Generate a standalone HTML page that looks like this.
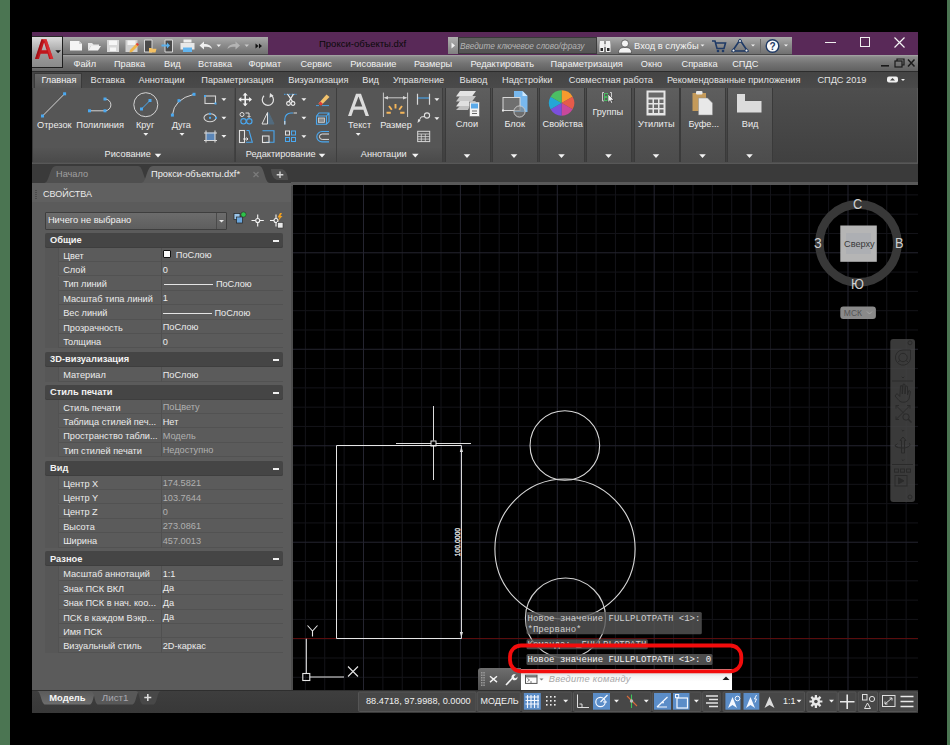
<!DOCTYPE html>
<html><head><meta charset="utf-8">
<style>
*{margin:0;padding:0;box-sizing:border-box}
html,body{width:950px;height:745px;overflow:hidden;background:#000;font-family:"Liberation Sans",sans-serif;font-size:9.2px;color:#e8e8e8}
.a{position:absolute;white-space:nowrap}
.t{line-height:11px}
.mb .t{color:#f2f2f2}
.tb .t{color:#e4e4e4}
.rt .t{color:#ececec}
.cm{font-family:"Liberation Mono",monospace;font-size:9px;line-height:11px}
.vl{font-size:14.5px;line-height:15px;color:#d0d0d0;transform:scaleX(.88);transform-origin:0 0}
.pb{font-weight:bold;color:#f2f2f2;font-size:9.3px}
.bp{top:88px;width:46px;height:73.5px;background:linear-gradient(#5e5e5e,#4c4c4c);border-left:1px solid #3a3a3a;border-right:1px solid #3a3a3a}
</style></head><body>
<div class="a" style="left:0;top:0;width:10px;height:745px;background:#4b7552"></div>
<div class="a" style="left:947px;top:0;width:3px;height:745px;background:#4b7552"></div>
<div class="a" style="left:32px;top:32px;width:886px;height:681px;background:#3c3c3c"></div>
<!-- ===== TITLE BAR ===== -->
<div class="a" style="left:32px;top:32px;width:886px;height:23.5px;background:#592958"></div>
<!-- logo button -->
<div class="a" style="left:32px;top:36px;width:31px;height:32px;background:linear-gradient(#dcdcdc,#9a9a9a 60%,#8a8a8a);border:1px solid #1e1e1e;border-left:none;border-top-color:#2a2a2a"></div>
<svg class="a" style="left:32px;top:36px" width="31" height="32" viewBox="32 36 31 32">
 <path d="M35 59 L41.5 39.2 H46.5 L53.3 59 H49.2 L47.6 53.8 H40.6 L39 59 Z M41.6 50.3 H46.6 L44.1 42.5 Z" fill="#c0161c"/>
 <path d="M41.5 39.2 H46.5 L53.3 59 H50.6 L44.6 41 Z" fill="#e23a3e" opacity=".65"/>
 <path d="M35 59 L41.5 39.2 H42.8 L37 59 Z" fill="#8e0c10" opacity=".6"/>
 <path d="M55.3 50.3 H61 L58.15 53.2 Z" fill="#1e1e1e"/>
</svg>
<!-- QAT -->
<div class="a" style="left:63px;top:37px;width:205px;height:18px;background:linear-gradient(#a9a9a9,#8a8a8a 50%,#707070);border-bottom:1px solid #4a4a4a"></div>
<svg class="a" style="left:63px;top:37px" width="205" height="18" viewBox="0 0 205 18">
 <!-- new -->
 <path d="M7 4 H16 L19 7 V13.5 H7 Z" fill="#f4f4f4"/>
 <path d="M16 4 V7 H19" fill="#cfcfcf"/>
 <!-- open -->
 <path d="M25 6 H29 L30.5 7.5 H36 V9 H28 L25 13.5 Z" fill="#e8e8e8"/>
 <path d="M28 9 H38 L35 13.5 H25 Z" fill="#f2f2f2"/>
 <!-- save -->
 <path d="M44 3 H56 V15 H44 Z" fill="#d8d8d8"/>
 <path d="M46 3.5 H54 V8 H46 Z" fill="#f6f6f6"/>
 <path d="M47 10.5 H53 V14 H47 Z" fill="#f6f6f6"/>
 <!-- save as -->
 <path d="M62.5 3 H74.5 V15 H62.5 Z" fill="#d0d0d0"/>
 <path d="M64.5 3.5 H72.5 V8 H64.5 Z" fill="#f2f2f2"/>
 <path d="M67 13 L73.5 6.5 L75.5 8.5 L69 15 L66.5 15.5 Z" fill="#f0b64a"/>
 <path d="M72.8 7.2 L74.2 5.8 L76 7.6 L74.6 9 Z" fill="#e0403a"/>
 <!-- phone folder -->
 <path d="M81.5 3 H89 V15 H81.5 Z" fill="#4a4a4a" stroke="#d8d8d8" stroke-width="1"/>
 <path d="M86 11 H88.5 L89.3 11.8 H93.5 L92.5 15.5 H86 Z" fill="#f3c062"/>
 <!-- phone arrow -->
 <path d="M102 3 H109.5 V15 H102 Z" fill="#4a4a4a" stroke="#d8d8d8" stroke-width="1"/>
 <path d="M98.5 7.5 H104 V5.5 L107 8.5 L104 11.5 V9.5 H98.5 Z" fill="#5ab0ec"/>
 <!-- print -->
 <path d="M120.5 2.5 H128.5 V5.5 H120.5 Z" fill="#efefef"/>
 <path d="M117.5 6 H131.5 V12.5 H117.5 Z" fill="#e8e8e8"/>
 <path d="M120 10.5 H129 V15 H120 Z" fill="#62b4ee"/>
 <!-- undo -->
 <path d="M136.5 8.5 L141 4.5 V7 C145.5 7 148.5 8.5 149 12 C147 10 145 9.8 141 9.8 V12.5 Z" fill="#f0f0f0"/>
 <path d="M153.5 7.5 H158 L155.75 10 Z" fill="#f0f0f0"/>
 <!-- redo -->
 <path d="M177 8.5 L172.5 4.5 V7 C168 7 165 8.5 164.5 12 C166.5 10 168.5 9.8 172.5 9.8 V12.5 Z" fill="#b4b4b4"/>
 <path d="M181.5 7.5 H186 L183.75 10 Z" fill="#c8c8c8"/>
 <!-- >> -->
 <path d="M192.5 6.5 L195.5 9 L192.5 11.5 Z M196 6.5 L199 9 L196 11.5 Z" fill="#111"/>
</svg>
<div class="a t" style="left:319px;top:37.5px;width:120px;font-size:9.5px;color:#0a0a0a">Прокси-объекты.dxf</div>
<!-- search -->
<div class="a" style="left:448px;top:37px;width:10px;height:17px;background:linear-gradient(#b0b0b0,#808080)"></div>
<svg class="a" style="left:448px;top:37px" width="10" height="17"><path d="M3.5 5.5 L7 8.5 L3.5 11.5 Z" fill="#f2f2f2"/></svg>
<div class="a" style="left:458px;top:37px;width:139px;height:17px;background:linear-gradient(#5e5e5e,#545454);border:1px solid #3c3c3c;border-top-color:#383838"></div>
<div class="a t" style="left:460px;top:40.5px;font-style:italic;color:#b4b4b4;font-size:8.3px">Введите ключевое слово/фразу</div>
<div class="a" style="left:597px;top:37px;width:195px;height:18px;background:linear-gradient(#a9a9a9,#8a8a8a 50%,#707070);border-bottom:1px solid #4a4a4a"></div>
<svg class="a" style="left:597px;top:37px" width="195" height="18" viewBox="0 0 195 18">
 <!-- binoculars -->
 <path d="M3 4 H7 V15 H2.5 V8 Z M9 4 H13 L13.5 8 V15 H9 Z" fill="#f2f2f2"/>
 <path d="M7 7 H9 V10 H7 Z" fill="#dcdcdc"/>
 <rect x="3.5" y="11" width="2.5" height="3" fill="#2a2a2a"/><rect x="10" y="11" width="2.5" height="3" fill="#2a2a2a"/>
 <!-- user -->
 <circle cx="28" cy="6.5" r="3.6" fill="#f3f3f3" stroke="#333" stroke-width=".6"/>
 <path d="M21.5 16 C21.5 11.5 24 10.5 28 10.5 C32 10.5 34.5 11.5 34.5 16 Z" fill="#f3f3f3" stroke="#333" stroke-width=".6"/>
 <!-- arrow -->
 <path d="M103.5 7.5 H107.5 L105.5 9.5 Z" fill="#f0f0f0"/>
 <!-- cart -->
 <path d="M115 4 H118 L120 11.5 H127 L128.5 6 H119" fill="none" stroke="#1f3a66" stroke-width="1.6"/>
 <circle cx="121" cy="14" r="1.3" fill="#1f3a66"/><circle cx="126" cy="14" r="1.3" fill="#1f3a66"/>
 <!-- autodesk -->
 <path d="M143 3 L150.5 14 H135.5 Z" fill="none" stroke="#1f3a66" stroke-width="1.6"/>
 <circle cx="143" cy="4" r="1.5" fill="#f0f0f0" stroke="#1f3a66"/>
 <circle cx="136.5" cy="13.5" r="1.5" fill="#f0f0f0" stroke="#1f3a66"/>
 <circle cx="149.5" cy="13.5" r="1.5" fill="#f0f0f0" stroke="#1f3a66"/>
 <path d="M154 7.5 H158 L156 9.5 Z" fill="#f0f0f0"/>
 <rect x="163" y="2" width="1" height="14" fill="#6a6a6a"/>
 <!-- help -->
 <circle cx="175.5" cy="9" r="6.3" fill="#fbfbfb" stroke="#1f3a66" stroke-width="1.4"/>
 <text x="175.5" y="12.6" font-family="Liberation Sans" font-weight="bold" font-size="10" fill="#1f3a66" text-anchor="middle">?</text>
 <path d="M187 7.5 H191 L189 9.5 Z" fill="#f0f0f0"/>
</svg>
<div class="a t" style="left:634px;top:40.8px;color:#f4f4f4;font-size:9.35px">Вход в службы</div>
<!-- window controls -->
<div class="a" style="left:825px;top:42px;width:11px;height:1px;background:#f0f0f0"></div>
<div class="a" style="left:860px;top:37px;width:10px;height:10px;border:1px solid #f0f0f0"></div>
<svg class="a" style="left:894px;top:37px" width="11" height="11"><path d="M.5 .5 L10.5 10.5 M10.5 .5 L.5 10.5" stroke="#f4f4f4" stroke-width="1.2"/></svg>

<!-- ===== MENU BAR ===== -->
<div class="a" style="left:63px;top:55px;width:855px;height:15.5px;background:linear-gradient(#a8a8a8,#8a8a8a 12%,#727272 55%,#606060)"></div>
<div class="a" style="left:32px;top:68px;width:31px;height:2.5px;background:linear-gradient(#6e6e6e,#606060)"></div>
<div class="a" style="left:32px;top:70.5px;width:886px;height:1px;background:#2c2c2c"></div>
<div class="mb">
 <div class="a t" style="left:73.5px;top:59px">Файл</div>
 <div class="a t" style="left:114px;top:59px">Правка</div>
 <div class="a t" style="left:164px;top:59px">Вид</div>
 <div class="a t" style="left:198px;top:59px">Вставка</div>
 <div class="a t" style="left:248.5px;top:59px">Формат</div>
 <div class="a t" style="left:300.4px;top:59px">Сервис</div>
 <div class="a t" style="left:350.2px;top:59px">Рисование</div>
 <div class="a t" style="left:414px;top:59px">Размеры</div>
 <div class="a t" style="left:470.5px;top:59px">Редактировать</div>
 <div class="a t" style="left:550.6px;top:59px">Параметризация</div>
 <div class="a t" style="left:640.8px;top:59px">Окно</div>
 <div class="a t" style="left:681.5px;top:59px">Справка</div>
 <div class="a t" style="left:732.2px;top:59px">СПДС</div>
</div>
<svg class="a" style="left:878px;top:56px" width="40" height="14" viewBox="0 0 40 14">
 <rect x="3" y="9" width="8" height="1.6" fill="#1a1a1a"/>
 <rect x="17" y="5" width="7" height="6" fill="none" stroke="#1a1a1a" stroke-width="1.2"/>
 <path d="M19 5 V3 H26 V9 H24" fill="none" stroke="#1a1a1a" stroke-width="1.2"/>
 <path d="M30 3.5 L36.5 10.5 M36.5 3.5 L30 10.5" stroke="#1a1a1a" stroke-width="1.5"/>
</svg>

<!-- ===== RIBBON TAB ROW ===== -->
<div class="a" style="left:32px;top:71.5px;width:886px;height:16.5px;background:linear-gradient(#444,#4a4a4a)"></div>
<div class="a" style="left:34px;top:73px;width:48px;height:15px;background:linear-gradient(#676767,#575757);border:1px solid #3a3a3a;border-bottom:none"></div>
<div class="tb">
 <div class="a t" style="left:41.4px;top:74.7px;color:#f6f6f6">Главная</div>
 <div class="a t" style="left:90.6px;top:74.7px">Вставка</div>
 <div class="a t" style="left:138.6px;top:74.7px">Аннотации</div>
 <div class="a t" style="left:201.3px;top:74.7px">Параметризация</div>
 <div class="a t" style="left:288.3px;top:74.7px">Визуализация</div>
 <div class="a t" style="left:362.3px;top:74.7px">Вид</div>
 <div class="a t" style="left:393.1px;top:74.7px">Управление</div>
 <div class="a t" style="left:459.6px;top:74.7px">Вывод</div>
 <div class="a t" style="left:502px;top:74.7px">Надстройки</div>
 <div class="a t" style="left:568.8px;top:74.7px">Совместная работа</div>
 <div class="a t" style="left:666.9px;top:74.7px">Рекомендованные приложения</div>
 <div class="a t" style="left:817.4px;top:74.7px">СПДС 2019</div>
</div>
<svg class="a" style="left:884px;top:73px" width="30" height="14" viewBox="0 0 30 14">
 <rect x="3" y="3.5" width="11" height="6" rx="2" fill="#f0f0f0"/>
 <path d="M6 7.5 L8.5 5 L11 7.5 Z" fill="#444"/>
 <path d="M17 6 H21 L19 8 Z" fill="#f0f0f0"/>
</svg>
<!-- ===== RIBBON ===== -->
<div class="a" style="left:32px;top:88px;width:886px;height:74px;background:linear-gradient(#4e4e4e,#404040)"></div>
<!-- tool panels (flat) -->
<div class="a" style="left:32px;top:88px;width:202px;height:59.5px;background:#565656;border-left:1px solid #3a3a3a"></div>
<div class="a" style="left:32px;top:147.5px;width:202px;height:14px;background:linear-gradient(#555,#4a4a4a);border-left:1px solid #3a3a3a"></div>
<div class="a" style="left:234.5px;top:88px;width:101px;height:59.5px;background:#565656;border-left:1px solid #3e3e3e"></div>
<div class="a" style="left:234.5px;top:147.5px;width:101px;height:14px;background:linear-gradient(#555,#4a4a4a);border-left:1px solid #3e3e3e"></div>
<div class="a" style="left:336px;top:88px;width:107px;height:59.5px;background:#565656;border-left:1px solid #3e3e3e;border-right:1px solid #3e3e3e"></div>
<div class="a" style="left:336px;top:147.5px;width:107px;height:14px;background:linear-gradient(#555,#4a4a4a);border-left:1px solid #3e3e3e;border-right:1px solid #3e3e3e"></div>
<!-- big-button panels -->
<div class="a bp" style="left:444.5px"></div>
<div class="a bp" style="left:492px"></div>
<div class="a bp" style="left:539px"></div>
<div class="a bp" style="left:586px"></div>
<div class="a bp" style="left:633.5px"></div>
<div class="a bp" style="left:680px"></div>
<div class="a bp" style="left:727px"></div>
<div class="a" style="left:32px;top:161.5px;width:886px;height:2.5px;background:linear-gradient(#4a4a4a,#5c5c5c)"></div>
<div class="a" style="left:916.5px;top:88px;width:1.5px;height:75px;background:#5a5a5a"></div>

<svg class="a" style="left:32px;top:88px" width="886" height="75" viewBox="32 88 886 75">
 <!-- line -->
 <path d="M42.5 116 L64.6 93.8" stroke="#d4d4d4" stroke-width="1"/>
 <rect x="41" y="114.5" width="3" height="3" fill="#4aa8f0"/><rect x="63.1" y="92.3" width="3" height="3" fill="#4aa8f0"/>
 <!-- polyline -->
 <path d="M89.5 110.8 H105 A5.9 5.9 0 0 0 105 99" stroke="#d4d4d4" stroke-width="1" fill="none"/>
 <rect x="88" y="109.3" width="3" height="3" fill="#4aa8f0"/><rect x="103.5" y="109.3" width="3" height="3" fill="#4aa8f0"/><rect x="103.5" y="97.5" width="3" height="3" fill="#4aa8f0"/>
 <!-- circle -->
 <circle cx="145.8" cy="104.7" r="12" stroke="#d4d4d4" stroke-width="1" fill="none"/>
 <path d="M141.5 109 L150 100.5" stroke="#4aa8f0" stroke-width="1"/>
 <rect x="140" y="107.5" width="3" height="3" fill="#4aa8f0"/><rect x="148.5" y="99" width="3" height="3" fill="#4aa8f0"/>
 <path d="M143.30 133.10 H148.30 L145.80 135.80 Z" fill="#f0f0f0"/>
 <!-- arc -->
 <path d="M172.4 115.1 Q174 99 194 94.3" stroke="#d4d4d4" stroke-width="1" fill="none"/>
 <rect x="170.9" y="113.6" width="3" height="3" fill="#4aa8f0"/><rect x="177.5" y="99.2" width="3" height="3" fill="#4aa8f0"/><rect x="192.5" y="92.8" width="3" height="3" fill="#4aa8f0"/>
 <path d="M179.50 133.10 H184.50 L182.00 135.80 Z" fill="#f0f0f0"/>
 <!-- rect small -->
 <rect x="205" y="96" width="10.5" height="7.5" stroke="#d4d4d4" stroke-width="1.1" fill="none"/>
 <rect x="204" y="95" width="2" height="2" fill="#4aa8f0"/><rect x="214.5" y="102.5" width="2" height="2" fill="#4aa8f0"/>
 <path d="M221.40 98.30 H226.40 L223.90 101.00 Z" fill="#f0f0f0"/>
 <!-- ellipse -->
 <ellipse cx="210" cy="117.8" rx="6" ry="4" stroke="#d4d4d4" stroke-width="1.1" fill="none"/>
 <rect x="209" y="116.8" width="2" height="2" fill="#4aa8f0"/><rect x="215" y="116.8" width="2" height="2" fill="#4aa8f0"/><rect x="209" y="112.8" width="2" height="2" fill="#4aa8f0"/>
 <path d="M221.40 116.80 H226.40 L223.90 119.50 Z" fill="#f0f0f0"/>
 <!-- hatch -->
 <rect x="206" y="132.5" width="9" height="8.5" fill="#5b86b8"/>
 <path d="M204 133 H217 M204 140.5 H217 M206 130.5 V142.5 M215 130.5 V142.5" stroke="#d8d8d8" stroke-width="1.1"/>
 <path d="M221.40 135.10 H226.40 L223.90 137.80 Z" fill="#f0f0f0"/>

 <!-- modify: move -->
 <path d="M245.2 93.5 V105.5 M239.2 99.5 H251.2" stroke="#f2f2f2" stroke-width="1.6"/>
 <path d="M245.2 92.8 L242.6 95.6 H247.8 Z M245.2 106.2 L242.6 103.4 H247.8 Z M238.5 99.5 L241.3 96.9 V102.1 Z M251.9 99.5 L249.1 96.9 V102.1 Z" fill="#f2f2f2"/>
 <!-- rotate -->
 <path d="M271.5 95.5 A5.6 5.6 0 1 1 264 95.7" stroke="#e4e4e4" stroke-width="1.2" fill="none"/>
 <path d="M270 93 L273.5 95.8 L269.5 97.8 Z" fill="#e4e4e4"/>
 <!-- trim -->
 <path d="M284 94.3 H297" stroke="#4aa8f0" stroke-width="1" stroke-dasharray="1.5 1"/>
 <path d="M287.5 94 L292.5 101.5 M293.5 94 L289 101.5" stroke="#f0f0f0" stroke-width="1.3"/>
 <circle cx="288.5" cy="103.5" r="1.9" stroke="#f0f0f0" stroke-width="1.1" fill="none"/><circle cx="293" cy="103.5" r="1.9" stroke="#f0f0f0" stroke-width="1.1" fill="none"/>
 <path d="M301.40 98.30 H306.40 L303.90 101.00 Z" fill="#f0f0f0"/>
 <!-- erase -->
 <path d="M318.5 103.5 L326.5 94.5 L329.5 97 L321 105.5 Z" fill="#f1c16c"/>
 <path d="M318.5 103.5 L320.5 101.5 L323 104 L321 105.5 Z" fill="#e03c38"/>
 <path d="M316 105.6 H319 M322 105.6 H329" stroke="#4aa8f0" stroke-width=".9"/>
 <!-- copy -->
 <circle cx="242" cy="114.5" r="2" stroke="#e0e0e0" stroke-width="1" fill="none"/>
 <path d="M245.5 113 H249 V117 M247.5 116 L249 117.5 L250.5 116" stroke="#e0e0e0" stroke-width="1" fill="none"/>
 <circle cx="243.5" cy="121.3" r="2.7" stroke="#4aa8f0" stroke-width="1.1" fill="none"/><circle cx="249.3" cy="121.3" r="2.7" stroke="#4aa8f0" stroke-width="1.1" fill="none"/>
 <!-- mirror -->
 <path d="M267.5 112.5 V124 H262 Z" fill="none" stroke="#e0e0e0" stroke-width="1"/>
 <path d="M268.5 112.5 V124 H274 Z" fill="#4aa8f0" opacity=".25" stroke="#4aa8f0" stroke-width="1"/>
 <!-- fillet -->
 <path d="M284.8 124.5 V119 A6 6 0 0 1 290.8 113 H293" stroke="#4aa8f0" stroke-width="1.1" fill="none"/>
 <path d="M284.8 121 V124.5 M293.5 113 H297" stroke="#e0e0e0" stroke-width="1.1"/>
 <path d="M301.40 116.80 H306.40 L303.90 119.50 Z" fill="#f0f0f0"/>
 <!-- 3d box -->
 <path d="M316.5 116 L319 113 H329 V121.5 L326.5 124.3 H316.5 Z M316.5 116 H326.5 V124.3 M326.5 116 L329 113" stroke="#4aa8f0" stroke-width="1.1" fill="none"/>
 <rect x="318.5" y="118" width="6" height="4.3" fill="#8a8a8a" stroke="#d8d8d8" stroke-width=".8"/>
 <!-- stretch -->
 <rect x="239.5" y="130.5" width="5" height="12" stroke="#e0e0e0" stroke-width="1.1" fill="none"/>
 <path d="M246.5 130.5 L249 130.5 L252.3 142.3 H246" stroke="#4aa8f0" stroke-width="1.1" fill="none"/>
 <path d="M243 139 H248 M246.5 137.5 L248 139 L246.5 140.5" stroke="#f0f0f0" stroke-width=".9" fill="none"/>
 <!-- scale -->
 <path d="M262.5 130.8 H274 V142.3 H266" stroke="#4aa8f0" stroke-width="1.1" fill="none"/>
 <rect x="262.5" y="136" width="6.5" height="6.5" stroke="#e0e0e0" stroke-width="1.1" fill="none"/>
 <!-- array -->
 <rect x="285.5" y="131" width="4" height="4" stroke="#e0e0e0" stroke-width="1" fill="none"/>
 <rect x="291.5" y="131" width="4" height="4" stroke="#4aa8f0" stroke-width="1" fill="none"/>
 <rect x="285.5" y="137.5" width="4" height="4" stroke="#4aa8f0" stroke-width="1" fill="none"/>
 <rect x="291.5" y="137.5" width="4" height="4" stroke="#4aa8f0" stroke-width="1" fill="none"/>
 <path d="M301.40 135.30 H306.40 L303.90 138.00 Z" fill="#f0f0f0"/>
 <!-- offset -->
 <path d="M329 131.5 H322 A5.2 5.2 0 0 0 322 141.9 H329" stroke="#4aa8f0" stroke-width="1.1" fill="none"/>
 <path d="M329 134 H322.2 A2.7 2.7 0 0 0 322.2 139.4 H329" stroke="#e0e0e0" stroke-width="1" fill="none"/>
 <path d="M318.70 153.70 H325.30 L322.00 157.50 Z" fill="#f4f4f4"/>
 <path d="M154.70 153.70 H161.30 L158.00 157.50 Z" fill="#f4f4f4"/>

 <!-- annotation A -->
 <path d="M348 116 L356 93.8 H361 L369 116 H365.6 L363.4 109.8 H353.6 L351.4 116 Z M354.7 106.6 H362.3 L358.5 96.5 Z" fill="#dcdcdc" fill-rule="evenodd"/>
 <path d="M355.70 133.10 H360.70 L358.20 135.80 Z" fill="#f0f0f0"/>
 <!-- dimension -->
 <path d="M383.4 92.6 V117 M407.6 92.6 V117" stroke="#d8d8d8" stroke-width=".9"/>
 <path d="M384.5 97.8 H406.5" stroke="#d8d8d8" stroke-width=".9"/>
 <path d="M384 97.8 L388 96 V99.6 Z M407 97.8 L403 96 V99.6 Z" fill="#d8d8d8"/>
 <path d="M395.5 104 V108.5 M389 106 L391.8 109.8 M402 106 L399.2 109.8 M386.5 112.8 H390.8 M404.5 112.8 H400.2" stroke="#f5b65a" stroke-width="1.9"/>
 <!-- linear dim small -->
 <path d="M417.5 93.8 V104.8 M429.5 93.8 V104.8" stroke="#d8d8d8" stroke-width="1.2"/>
 <path d="M418 98 H429" stroke="#4aa8f0" stroke-width="1.1"/>
 <path d="M434.40 98.30 H439.40 L436.90 101.00 Z" fill="#f0f0f0"/>
 <!-- leader -->
 <circle cx="427" cy="115.5" r="2.6" stroke="#e0e0e0" stroke-width="1.1" fill="none"/>
 <path d="M424.7 116.5 L421 117 L418.5 122" stroke="#e0e0e0" stroke-width="1" fill="none"/>
 <path d="M417.5 123 L418.2 119 L420.6 120.6 Z" fill="#e0e0e0"/>
 <path d="M434.40 117.30 H439.40 L436.90 120.00 Z" fill="#f0f0f0"/>
 <!-- table -->
 <rect x="417.7" y="131.3" width="12" height="10.3" stroke="#d8d8d8" stroke-width="1" fill="none"/>
 <path d="M417.7 134 H429.7 M417.7 136.6 H429.7 M417.7 139.1 H429.7 M421.3 134 V141.6 M425.3 134 V141.6" stroke="#d8d8d8" stroke-width=".8"/>
 <path d="M412.00 153.70 H418.60 L415.30 157.50 Z" fill="#f4f4f4"/>

 <!-- Layers -->
 <path d="M460 91 H476 L472 96.5 H456 Z" fill="#e4e4e4"/>
 <path d="M460 96 H476 L472 101.5 H456 Z" fill="#c8c8c8"/>
 <path d="M460 101 H476 L472 106.5 H456 Z" fill="#e0e0e0"/>
 <path d="M460 106 H470 L468 110 H456 Z" fill="#c0c0c0"/>
 <rect x="469.5" y="102" width="10" height="14.5" fill="#f2f2f2" stroke="#555" stroke-width=".5"/>
 <rect x="471" y="103.5" width="7" height="5" fill="#5aa9e8"/>
 <path d="M472 111 H477 M472 113.5 H477" stroke="#444" stroke-width=".8"/>
 <path d="M463.70 154.20 H470.30 L467.00 158.00 Z" fill="#f4f4f4"/>
 <!-- Block -->
 <path d="M514 91 H522.5 L527.5 96 V112 H514 Z" fill="#78b8ee"/>
 <path d="M522.5 91 V96 H527.5" fill="#d0e8fb"/>
 <rect x="503" y="97.5" width="17" height="13" fill="#6f6f6f" stroke="#d8d8d8" stroke-width="1"/>
 <circle cx="519.5" cy="111.5" r="5.6" fill="#7a7a7a" fill-opacity=".6" stroke="#c8c8c8" stroke-width="1"/>
 <rect x="502" y="109.5" width="2" height="2" fill="#e8e8e8"/>
 <path d="M510.70 154.20 H517.30 L514.00 158.00 Z" fill="#f4f4f4"/>
 <!-- Properties wheel -->
 <g transform="translate(561.6 103)">
  <path d="M0 0 L0 -12.7 A12.7 12.7 0 0 1 11 -6.35 Z" fill="#f79a2e"/>
  <path d="M0 0 L11 -6.35 A12.7 12.7 0 0 1 11 6.35 Z" fill="#e65b4a"/>
  <path d="M0 0 L11 6.35 A12.7 12.7 0 0 1 0 12.7 Z" fill="#c9489b"/>
  <path d="M0 0 L0 12.7 A12.7 12.7 0 0 1 -11 6.35 Z" fill="#7b4fdc"/>
  <path d="M0 0 L-11 6.35 A12.7 12.7 0 0 1 -11 -6.35 Z" fill="#24a6d6"/>
  <path d="M0 0 L-11 -6.35 A12.7 12.7 0 0 1 0 -12.7 Z" fill="#4cbe64"/>
  <path d="M0 0 L0 -12.7 A12.7 12.7 0 0 1 5 -11.7 Z" fill="#f4c02a" opacity=".0"/>
 </g>
 <path d="M558.20 154.20 H564.80 L561.50 158.00 Z" fill="#f4f4f4"/>
 <!-- Groups -->
 <path d="M604 92.5 H602.5 V101 H604 M610 92.5 H611.5 V101 H610" stroke="#d8d8d8" stroke-width=".9" fill="none"/>
 <rect x="604.5" y="93.5" width="3" height="3" fill="none" stroke="#4cbe64" stroke-width=".9"/>
 <rect x="604.5" y="97.5" width="3" height="3" fill="none" stroke="#4cbe64" stroke-width=".9"/>
 <path d="M608 94 L608 102.5 L610 100.5 L611.5 103.5 L612.8 103 L611.3 100 L614 100 Z" fill="#f4f4f4" stroke="#222" stroke-width=".5"/>
 <path d="M605.20 154.20 H611.80 L608.50 158.00 Z" fill="#f4f4f4"/>
 <!-- Utilities calc -->
 <rect x="646.5" y="90.5" width="19" height="25" fill="#e6e6e6"/>
 <rect x="648.5" y="92.5" width="15" height="5" fill="#6a6a6a"/>
 <g fill="#6a6a6a"><rect x="648.5" y="99.5" width="4" height="3.5"/><rect x="654" y="99.5" width="4" height="3.5"/><rect x="659.5" y="99.5" width="4" height="3.5"/>
 <rect x="648.5" y="104.5" width="4" height="3.5"/><rect x="654" y="104.5" width="4" height="3.5"/><rect x="659.5" y="104.5" width="4" height="3.5"/>
 <rect x="648.5" y="109.5" width="4" height="3.5"/><rect x="654" y="109.5" width="4" height="3.5"/><rect x="659.5" y="109.5" width="4" height="3.5"/></g>
 <path d="M652.70 154.20 H659.30 L656.00 158.00 Z" fill="#f4f4f4"/>
 <!-- Clipboard -->
 <rect x="692.5" y="93" width="13.5" height="18" fill="#c49a5a"/>
 <rect x="696" y="91" width="6.5" height="3.5" rx="1" fill="#e8e8e8"/>
 <path d="M698.5 98 H707.5 L712.5 103 V115 H698.5 Z" fill="#e8e8e8" stroke="#888" stroke-width=".5"/>
 <path d="M699.20 154.20 H705.80 L702.50 158.00 Z" fill="#f4f4f4"/>
 <!-- View -->
 <path d="M737 94 H745 V101 H761.5 V112.5 H737 Z" fill="#dcdcdc"/>
 <path d="M746.20 154.20 H752.80 L749.50 158.00 Z" fill="#f4f4f4"/>
</svg>
<div class="rt">
 <div class="a t" style="left:37px;top:120px">Отрезок</div>
 <div class="a t" style="left:76.3px;top:120px">Полилиния</div>
 <div class="a t" style="left:136px;top:120px">Круг</div>
 <div class="a t" style="left:171.7px;top:120px">Дуга</div>
 <div class="a t" style="left:104.6px;top:148.5px">Рисование</div>
 <div class="a t" style="left:245.7px;top:148.5px">Редактирование</div>
 <div class="a t" style="left:360.8px;top:148.5px">Аннотации</div>
 <div class="a t" style="left:348px;top:120px">Текст</div>
 <div class="a t" style="left:380.2px;top:120px">Размер</div>
 <div class="a t" style="left:455.7px;top:118.5px">Слои</div>
 <div class="a t" style="left:504.4px;top:118.5px">Блок</div>
 <div class="a t" style="left:542.6px;top:118.5px">Свойства</div>
 <div class="a t" style="left:592.4px;top:106.5px">Группы</div>
 <div class="a t" style="left:638px;top:118.5px">Утилиты</div>
 <div class="a t" style="left:688.4px;top:118.5px">Буфе...</div>
 <div class="a t" style="left:741.8px;top:118.5px">Вид</div>
</div>
<!-- ===== DOC TABS ===== -->
<div class="a" style="left:32px;top:164px;width:886px;height:19px;background:#3a3a3a"></div>
<svg class="a" style="left:32px;top:163px" width="886" height="20" viewBox="32 163 886 20">
 <path d="M44 183 C50 183 49 166 56 166 H138 C144 166 143 183 150 183 Z" fill="#4f4f4f"/>
 <path d="M141 183 C147 183 146 166 153 166 H259 C265 166 264 183 270 183 Z" fill="#5a5a5a"/>
 <path d="M271 169 H281 C286 169 288 176 288 180 H278 C273 180 271 173 271 169 Z" fill="#4e4e4e"/>
 <path d="M253.5 172 L258.5 177 M258.5 172 L253.5 177" stroke="#7a7a7a" stroke-width="1.3"/>
 <path d="M280 171.5 V178 M276.7 174.7 H283.3" stroke="#d4d4d4" stroke-width="1.4"/>
</svg>
<div class="a t" style="left:56px;top:169px;color:#a0a0a0">Начало</div>
<div class="a t" style="left:151px;top:169px;color:#f0f0f0;font-size:9.3px">Прокси-объекты.dxf*</div>
<!-- ===== PROPERTIES ===== -->
<div class="a" style="left:32px;top:183px;width:261px;height:507px;background:#5b5b5b;border-right:2px solid #4c4c4c"></div>
<div class="a" style="left:32px;top:183px;width:259px;height:18.5px;background:#606060"></div>
<div class="a" style="left:35px;top:190px;width:2px;height:10px;background:repeating-linear-gradient(#4a4a4a 0 1px,transparent 1px 2px)"></div>
<div class="a t" style="left:43px;top:188.5px;color:#eaeaea;font-size:9px">СВОЙСТВА</div>
<div class="a" style="left:44.5px;top:212px;width:182px;height:18px;background:linear-gradient(#6c6c6c,#5e5e5e);border:1px solid #3e3e3e;border-radius:1px"></div>
<div class="a" style="left:216px;top:213px;width:1px;height:16px;background:#4a4a4a"></div>
<svg class="a" style="left:217px;top:213px" width="9" height="16"><path d="M2 7 H7 L4.5 9.5 Z" fill="#e8e8e8"/></svg>
<div class="a t" style="left:47.9px;top:214.5px;color:#f0f0f0;font-size:9.3px">Ничего не выбрано</div>
<svg class="a" style="left:230px;top:210px" width="60" height="22" viewBox="230 210 60 22">
 <rect x="234" y="213.5" width="6" height="6" fill="#9bc6ea" stroke="#222" stroke-width=".7"/>
 <rect x="236.5" y="217" width="6" height="6" fill="#6aa6dc" stroke="#222" stroke-width=".7"/>
 <circle cx="243.5" cy="214.5" r="2.6" fill="#2ec24a" stroke="#222" stroke-width=".5"/>
 <circle cx="257.7" cy="220.5" r="2" fill="none" stroke="#f4f4f4" stroke-width="1.1"/>
 <path d="M251.5 220.5 H255.5 M259.8 220.5 H263.8 M257.7 214.5 V218.3 M257.7 222.7 V226.5" stroke="#f4f4f4" stroke-width="1.1"/>
 <circle cx="276" cy="220.5" r="2" fill="none" stroke="#f4f4f4" stroke-width="1.1"/>
 <path d="M270 220.5 H274 M276 214.5 V218.3 M276 222.7 V226.5" stroke="#f4f4f4" stroke-width="1.1"/>
 <path d="M280 213 L277.5 217.5 H279.5 L278 221 L282.5 216 H280.5 L282 213 Z" fill="#f0a020"/>
 <rect x="277.5" y="222.5" width="5.5" height="5.5" fill="#e8e8e8" stroke="#333" stroke-width=".6"/>
</svg>
<div class="a" style="left:44.5px;top:232.5px;width:238.5px;height:15.2px;background:#454545;border-radius:2px;box-shadow:inset 0 -1px 0 #3e3e3e"></div>
<div class="a t pb" style="left:50px;top:234.8px">Общие</div>
<div class="a" style="left:272.5px;top:239.5px;width:6px;height:2px;background:#f0f0f0"></div>
<div class="a" style="left:44.5px;top:247.7px;width:13.5px;height:100.8px;background:#575757"></div>
<div class="a" style="left:58px;top:247.7px;width:224.5px;height:14.4px;border-bottom:1px solid #525252;border-left:1px solid #525252"></div>
<div class="a t" style="left:63.2px;top:250.6px;color:#ececec">Цвет</div>
<div class="a" style="left:163.2px;top:249.9px;width:7.5px;height:8.5px;background:#fafafa;border:1px solid #111;border-radius:1px"></div>
<div class="a t" style="left:175.8px;top:250.2px;color:#ececec">ПоСлою</div>
<div class="a" style="left:58px;top:262.1px;width:224.5px;height:14.4px;border-bottom:1px solid #525252;border-left:1px solid #525252"></div>
<div class="a t" style="left:63.2px;top:265.0px;color:#ececec">Слой</div>
<div class="a t" style="left:162.7px;top:264.6px;color:#ececec">0</div>
<div class="a" style="left:58px;top:276.5px;width:224.5px;height:14.4px;border-bottom:1px solid #525252;border-left:1px solid #525252"></div>
<div class="a t" style="left:63.2px;top:279.4px;color:#ececec">Тип линий</div>
<div class="a" style="left:164.4px;top:283.9px;width:48.5px;height:1.3px;background:#e4e4e4"></div>
<div class="a t" style="left:215.9px;top:279.0px;color:#ececec">ПоСлою</div>
<div class="a" style="left:58px;top:290.9px;width:224.5px;height:14.4px;border-bottom:1px solid #525252;border-left:1px solid #525252"></div>
<div class="a t" style="left:63.2px;top:293.8px;color:#ececec">Масштаб типа линий</div>
<div class="a t" style="left:162.7px;top:293.4px;color:#ececec">1</div>
<div class="a" style="left:58px;top:305.3px;width:224.5px;height:14.4px;border-bottom:1px solid #525252;border-left:1px solid #525252"></div>
<div class="a t" style="left:63.2px;top:308.2px;color:#ececec">Вес линий</div>
<div class="a" style="left:163px;top:312.7px;width:48.5px;height:1.3px;background:#e4e4e4"></div>
<div class="a t" style="left:214.5px;top:307.8px;color:#ececec">ПоСлою</div>
<div class="a" style="left:58px;top:319.7px;width:224.5px;height:14.4px;border-bottom:1px solid #525252;border-left:1px solid #525252"></div>
<div class="a t" style="left:63.2px;top:322.6px;color:#ececec">Прозрачность</div>
<div class="a t" style="left:162.7px;top:322.2px;color:#ececec">ПоСлою</div>
<div class="a" style="left:58px;top:334.1px;width:224.5px;height:14.4px;border-bottom:1px solid #525252;border-left:1px solid #525252"></div>
<div class="a t" style="left:63.2px;top:337.0px;color:#ececec">Толщина</div>
<div class="a t" style="left:162.7px;top:336.6px;color:#ececec">0</div>
<div class="a" style="left:160.5px;top:247.7px;width:1px;height:100.8px;background:#505050"></div>
<div class="a" style="left:44.5px;top:352.1px;width:238.5px;height:15.2px;background:#454545;border-radius:2px;box-shadow:inset 0 -1px 0 #3e3e3e"></div>
<div class="a t pb" style="left:50px;top:354.4px">3D-визуализация</div>
<div class="a" style="left:272.5px;top:359.1px;width:6px;height:2px;background:#f0f0f0"></div>
<div class="a" style="left:44.5px;top:367.3px;width:13.5px;height:14.4px;background:#575757"></div>
<div class="a" style="left:58px;top:367.3px;width:224.5px;height:14.4px;border-bottom:1px solid #525252;border-left:1px solid #525252"></div>
<div class="a t" style="left:63.2px;top:370.2px;color:#ececec">Материал</div>
<div class="a t" style="left:162.7px;top:369.8px;color:#ececec">ПоСлою</div>
<div class="a" style="left:160.5px;top:367.3px;width:1px;height:14.4px;background:#505050"></div>
<div class="a" style="left:44.5px;top:384.5px;width:238.5px;height:15.2px;background:#454545;border-radius:2px;box-shadow:inset 0 -1px 0 #3e3e3e"></div>
<div class="a t pb" style="left:50px;top:386.8px">Стиль печати</div>
<div class="a" style="left:272.5px;top:391.5px;width:6px;height:2px;background:#f0f0f0"></div>
<div class="a" style="left:44.5px;top:399.7px;width:13.5px;height:57.6px;background:#575757"></div>
<div class="a" style="left:58px;top:399.7px;width:224.5px;height:14.4px;border-bottom:1px solid #525252;border-left:1px solid #525252"></div>
<div class="a t" style="left:63.2px;top:402.6px;color:#ececec">Стиль печати</div>
<div class="a t" style="left:162.7px;top:402.2px;color:#b0b0b0">ПоЦвету</div>
<div class="a" style="left:58px;top:414.1px;width:224.5px;height:14.4px;border-bottom:1px solid #525252;border-left:1px solid #525252"></div>
<div class="a t" style="left:63.2px;top:417.0px;color:#ececec">Таблица стилей печ...</div>
<div class="a t" style="left:162.7px;top:416.6px;color:#ececec">Нет</div>
<div class="a" style="left:58px;top:428.5px;width:224.5px;height:14.4px;border-bottom:1px solid #525252;border-left:1px solid #525252"></div>
<div class="a t" style="left:63.2px;top:431.4px;color:#ececec">Пространство табли...</div>
<div class="a t" style="left:162.7px;top:431.0px;color:#b0b0b0">Модель</div>
<div class="a" style="left:58px;top:442.9px;width:224.5px;height:14.4px;border-bottom:1px solid #525252;border-left:1px solid #525252"></div>
<div class="a t" style="left:63.2px;top:445.8px;color:#ececec">Тип стилей печати</div>
<div class="a t" style="left:162.7px;top:445.4px;color:#b0b0b0">Недоступно</div>
<div class="a" style="left:160.5px;top:399.7px;width:1px;height:57.6px;background:#505050"></div>
<div class="a" style="left:44.5px;top:460.5px;width:238.5px;height:15.2px;background:#454545;border-radius:2px;box-shadow:inset 0 -1px 0 #3e3e3e"></div>
<div class="a t pb" style="left:50px;top:462.8px">Вид</div>
<div class="a" style="left:272.5px;top:467.5px;width:6px;height:2px;background:#f0f0f0"></div>
<div class="a" style="left:44.5px;top:475.7px;width:13.5px;height:72.0px;background:#575757"></div>
<div class="a" style="left:58px;top:475.7px;width:224.5px;height:14.4px;border-bottom:1px solid #525252;border-left:1px solid #525252"></div>
<div class="a t" style="left:63.2px;top:478.6px;color:#ececec">Центр X</div>
<div class="a t" style="left:162.7px;top:478.2px;color:#b0b0b0">174.5821</div>
<div class="a" style="left:58px;top:490.1px;width:224.5px;height:14.4px;border-bottom:1px solid #525252;border-left:1px solid #525252"></div>
<div class="a t" style="left:63.2px;top:493.0px;color:#ececec">Центр Y</div>
<div class="a t" style="left:162.7px;top:492.6px;color:#b0b0b0">103.7644</div>
<div class="a" style="left:58px;top:504.5px;width:224.5px;height:14.4px;border-bottom:1px solid #525252;border-left:1px solid #525252"></div>
<div class="a t" style="left:63.2px;top:507.4px;color:#ececec">Центр Z</div>
<div class="a t" style="left:162.7px;top:507.0px;color:#b0b0b0">0</div>
<div class="a" style="left:58px;top:518.9px;width:224.5px;height:14.4px;border-bottom:1px solid #525252;border-left:1px solid #525252"></div>
<div class="a t" style="left:63.2px;top:521.8px;color:#ececec">Высота</div>
<div class="a t" style="left:162.7px;top:521.4px;color:#b0b0b0">273.0861</div>
<div class="a" style="left:58px;top:533.3px;width:224.5px;height:14.4px;border-bottom:1px solid #525252;border-left:1px solid #525252"></div>
<div class="a t" style="left:63.2px;top:536.2px;color:#ececec">Ширина</div>
<div class="a t" style="left:162.7px;top:535.8px;color:#b0b0b0">457.0013</div>
<div class="a" style="left:160.5px;top:475.7px;width:1px;height:72.0px;background:#505050"></div>
<div class="a" style="left:44.5px;top:551.2px;width:238.5px;height:15.2px;background:#454545;border-radius:2px;box-shadow:inset 0 -1px 0 #3e3e3e"></div>
<div class="a t pb" style="left:50px;top:553.5px">Разное</div>
<div class="a" style="left:272.5px;top:558.2px;width:6px;height:2px;background:#f0f0f0"></div>
<div class="a" style="left:44.5px;top:566.4px;width:13.5px;height:86.4px;background:#575757"></div>
<div class="a" style="left:58px;top:566.4px;width:224.5px;height:14.4px;border-bottom:1px solid #525252;border-left:1px solid #525252"></div>
<div class="a t" style="left:63.2px;top:569.3px;color:#ececec">Масштаб аннотаций</div>
<div class="a t" style="left:162.7px;top:568.9px;color:#ececec">1:1</div>
<div class="a" style="left:58px;top:580.8px;width:224.5px;height:14.4px;border-bottom:1px solid #525252;border-left:1px solid #525252"></div>
<div class="a t" style="left:63.2px;top:583.7px;color:#ececec">Знак ПСК ВКЛ</div>
<div class="a t" style="left:162.7px;top:583.3px;color:#ececec">Да</div>
<div class="a" style="left:58px;top:595.2px;width:224.5px;height:14.4px;border-bottom:1px solid #525252;border-left:1px solid #525252"></div>
<div class="a t" style="left:63.2px;top:598.1px;color:#ececec">Знак ПСК в нач. коо...</div>
<div class="a t" style="left:162.7px;top:597.7px;color:#ececec">Да</div>
<div class="a" style="left:58px;top:609.6px;width:224.5px;height:14.4px;border-bottom:1px solid #525252;border-left:1px solid #525252"></div>
<div class="a t" style="left:63.2px;top:612.5px;color:#ececec">ПСК в каждом Вэкр...</div>
<div class="a t" style="left:162.7px;top:612.1px;color:#ececec">Да</div>
<div class="a" style="left:58px;top:624.0px;width:224.5px;height:14.4px;border-bottom:1px solid #525252;border-left:1px solid #525252"></div>
<div class="a t" style="left:63.2px;top:626.9px;color:#ececec">Имя ПСК</div>
<div class="a" style="left:58px;top:638.4px;width:224.5px;height:14.4px;border-bottom:1px solid #525252;border-left:1px solid #525252"></div>
<div class="a t" style="left:63.2px;top:641.3px;color:#ececec">Визуальный стиль</div>
<div class="a t" style="left:162.7px;top:640.9px;color:#ececec">2D-каркас</div>
<div class="a" style="left:160.5px;top:566.4px;width:1px;height:86.4px;background:#505050"></div>
<!-- ===== DRAWING ===== -->
<div class="a" style="left:291px;top:182px;width:627px;height:3.5px;background:#595959"></div>
<svg class="a" style="left:293px;top:185px" width="625" height="505" viewBox="293 185 625 505">
 <rect x="293" y="185" width="625" height="505" fill="#000"/>
 <path d="M305.36 185V690M324.74 185V690M344.12 185V690M382.88 185V690M402.26 185V690M421.64 185V690M441.02 185V690M479.78 185V690M499.16 185V690M518.54 185V690M537.92 185V690M576.68 185V690M596.06 185V690M615.44 185V690M634.82 185V690M673.58 185V690M692.96 185V690M712.34 185V690M731.72 185V690M770.48 185V690M789.86 185V690M809.24 185V690M828.62 185V690M867.38 185V690M886.76 185V690M906.14 185V690M293 194.90H918M293 214.20H918M293 233.49H918M293 272.08H918M293 291.38H918M293 310.68H918M293 329.97H918M293 368.56H918M293 387.86H918M293 407.16H918M293 426.45H918M293 465.04H918M293 484.34H918M293 503.64H918M293 522.93H918M293 561.52H918M293 580.82H918M293 600.12H918M293 619.41H918M293 658.00H918M293 677.30H918" stroke="#141419" stroke-width="1"/>
 <path d="M363.50 185V690M460.40 185V690M557.30 185V690M654.20 185V690M751.10 185V690M848.00 185V690M293 252.79H918M293 349.27H918M293 445.75H918M293 542.23H918M293 638.71H918" stroke="#252530" stroke-width="1"/>
 <!-- red x axis -->
 <path d="M293 638.5 H918" stroke="#5a0d0d" stroke-width="1"/>
 <!-- rectangle -->
 <path d="M336.5 638.5 V445.5 H461.5 M336.5 638.5 H461.5" stroke="#e6e6e6" stroke-width="1" fill="none"/>
 <!-- dimension -->
 <path d="M461.5 445.5 V638.5" stroke="#d8d8d8" stroke-width="1"/>
 <path d="M461.4 446.5 L459.8 452 H463 Z M461.4 637.6 L459.8 632 H463 Z" fill="#e0e0e0"/>
 <text transform="translate(460.2 556.5) rotate(-90)" font-family="Liberation Sans" font-size="8" fill="#f0f0f0" stroke="#f0f0f0" stroke-width=".25" textLength="28.7" lengthAdjust="spacingAndGlyphs">100.0000</text>
 <!-- crosshair -->
 <path d="M433.5 406 V440.5 M433.5 446 V480 M396 443.5 H431 M436 443.5 H471" stroke="#dcdcdc" stroke-width="1"/>
 <rect x="431" y="441" width="5" height="5" fill="none" stroke="#e8e8e8" stroke-width="1"/>
 <!-- circles -->
 <circle cx="564.85" cy="445.5" r="34.8" stroke="#d8d8d8" stroke-width="1.1" fill="none"/>
 <circle cx="565" cy="549.1" r="70.1" stroke="#d8d8d8" stroke-width="1.1" fill="none"/>
 <circle cx="565.5" cy="618.1" r="40.1" stroke="#cfcfcf" stroke-width="1.1" fill="none"/>
 <!-- UCS -->
 <path d="M306.3 638.8 V673.5 M309.8 677 H344" stroke="#e6e6e6" stroke-width="1.1"/>
 <rect x="302.8" y="673.5" width="7" height="7" fill="none" stroke="#e6e6e6" stroke-width="1.1"/>
 <path d="M307.5 625.5 L312.5 631 L317.5 625.5 M312.5 631 V636.5" stroke="#e6e6e6" stroke-width="1.1" fill="none"/>
 <path d="M348 666.5 L358 676.5 M358 666.5 L348 676.5" stroke="#e6e6e6" stroke-width="1.1"/>
 <!-- viewcube -->
 <circle cx="858.4" cy="243.4" r="39" fill="none" stroke="#383838" stroke-width="8.6"/>
 <rect x="840.3" y="225.5" width="36.5" height="36.3" fill="#b5b5b5"/>
 <rect x="846" y="233" width="25" height="21" fill="#a9acb2" opacity=".6"/>
 <!-- MSK -->
 <rect x="840.3" y="306.6" width="35.6" height="12.3" rx="3" fill="#8a8a8a"/>
 <path d="M867 311.5 L869.5 314 L872 311.5" stroke="#a8a8a8" stroke-width="1" fill="none"/>
 <!-- nav bar -->
 <rect x="890.3" y="339" width="24.7" height="163" rx="3" fill="#484848" fill-opacity=".8"/>
 <g stroke="#2a2a2a" fill="none" stroke-width="1">
  <circle cx="910" cy="342.8" r="2"/>
  <path d="M895.5 359 A7.5 7.5 0 1 0 910.5 356 V350 H903 A7.5 7.5 0 0 0 895.5 359 Z"/>
  <circle cx="903" cy="357.5" r="4.2"/>
  <path d="M898 362 L900 360.5 M908 362 L906 360.5"/>
  <path d="M901.8 376.8 L903 378 L904.2 376.8"/>
  <path d="M892 381 H913"/>
  <path d="M895 396 L899 400.5 C901 403 907 403 909 399 L910.5 391.5 L908.8 390.5 L907.5 395 V386.5 L905.8 385.8 L905 394 V384.5 L903.2 384 L902.3 394 V385.8 L900.5 385.8 L899.8 396.5 L897 393.5 Z"/>
  <path d="M896 405.5 L904 413.5 M910 405.5 L896 419.5"/>
  <path d="M896 405.5 V408.5 M896 405.5 H899 M910 405.5 V408.5 M910 405.5 H907 M896 419.5 V416.5 M896 419.5 H899"/>
  <circle cx="906" cy="417" r="3.2"/><path d="M908.3 419.3 L911.5 422.5" stroke-width="1.5"/>
  <path d="M901.8 430 L903 431.2 L904.2 430"/>
  <path d="M903 437 L906 440.5 H904.5 V453 H901.5 V440.5 H900 Z"/>
  <path d="M909 443 C912 445 908 448 903 448 C898 448 894 446.5 895.5 444.5"/>
  <path d="M895 446 L897.5 443.5 M895 446 L898 447.5"/>
  <path d="M901.8 459.5 L903 460.7 L904.2 459.5"/>
  <path d="M892 464.5 H913"/>
  <rect x="894.5" y="469" width="4" height="3.2"/><rect x="900.5" y="469" width="4" height="3.2"/><rect x="906.5" y="469" width="4" height="3.2"/>
  <rect x="895" y="475.5" width="12" height="10.5"/>
  <path d="M898.5 477.8 L904 480.8 L898.5 483.8 Z" fill="#2a2a2a"/>
  <circle cx="910" cy="497" r="2"/>
 </g>
 <!-- command history -->
 <rect x="526.5" y="612" width="175.3" height="22.2" rx="1.5" fill="#5a5a5a" fill-opacity=".78"/>
 <rect x="526.5" y="639.2" width="121.3" height="10" rx="1.5" fill="#5a5a5a" fill-opacity=".78"/>
 <rect x="526.5" y="654" width="186" height="11" rx="1.5" fill="#5a5a5a" fill-opacity=".85"/>
</svg>
<div class="a cm" style="left:527.5px;top:613.5px;color:#cfcfcf">Новое значение FULLPLOTPATH &lt;1&gt;:</div>
<div class="a cm" style="left:527.5px;top:624.5px;color:#cfcfcf">*Прервано*</div>
<div class="a cm" style="left:527.5px;top:640px;color:#d0d0d0">Команда: _FULLPLOTPATH</div>
<div class="a cm" style="left:527.5px;top:654.5px;color:#f4f4f4">Новое значение FULLPLOTPATH &lt;1&gt;: 0</div>
<!-- viewcube letters -->
<div class="a vl" style="left:853px;top:196.5px">С</div>
<div class="a vl" style="left:813.5px;top:236px">З</div>
<div class="a vl" style="left:894.5px;top:236px">В</div>
<div class="a vl" style="left:851px;top:276.5px">Ю</div>
<div class="a" style="left:844px;top:238.5px;font-size:9.2px;line-height:11px;color:#383838">Сверху</div>
<div class="a" style="left:843.8px;top:307.5px;font-size:8.5px;line-height:10px;color:#555">МСК</div>
<!-- command input -->
<div class="a" style="left:478px;top:668px;width:43px;height:22px;background:linear-gradient(#6e6e6e,#4e4e4e);border-radius:3px 0 0 0"></div>
<svg class="a" style="left:478px;top:668px" width="43" height="22" viewBox="478 668 43 22">
 <g fill="#9a9a9a"><rect x="481" y="672" width="1.5" height="1.5"/><rect x="483.3" y="672" width="1.5" height="1.5"/><rect x="481" y="674.5" width="1.5" height="1.5"/><rect x="483.3" y="674.5" width="1.5" height="1.5"/><rect x="481" y="677" width="1.5" height="1.5"/><rect x="483.3" y="677" width="1.5" height="1.5"/><rect x="481" y="679.5" width="1.5" height="1.5"/><rect x="483.3" y="679.5" width="1.5" height="1.5"/><rect x="481" y="682" width="1.5" height="1.5"/><rect x="483.3" y="682" width="1.5" height="1.5"/><rect x="481" y="684.5" width="1.5" height="1.5"/><rect x="483.3" y="684.5" width="1.5" height="1.5"/></g>
 <path d="M490 676.3 L497 682.1 M497 676.3 L490 682.1" stroke="#f4f4f4" stroke-width="1.4"/>
 <path d="M506 685 L513 677.5" stroke="#f4f4f4" stroke-width="1.6"/>
 <path d="M512 678.5 C510.5 676 513 673.5 515.8 674.5 L513.8 676.5 L514.5 678 L516 678.2 L517.5 676.5 C518 679.5 515.5 681 513 680 Z" fill="#f4f4f4"/>
</svg>
<div class="a" style="left:521px;top:668.5px;width:211px;height:21.5px;background:linear-gradient(#c0c4c4,#f4f4f4 35%,#fff 60%)"></div>
<svg class="a" style="left:521px;top:668px" width="211" height="22" viewBox="521 668 211 22">
 <rect x="525.5" y="675.2" width="11.5" height="8.2" fill="none" stroke="#555" stroke-width="1"/>
 <path d="M525.5 676.8 H537" stroke="#555" stroke-width="1.2"/>
 <path d="M527.5 678.5 L529.5 680 L527.5 681.5 M530 682 H532" stroke="#555" stroke-width=".8" fill="none"/>
 <path d="M539.5 678.5 H543.5 L541.5 680.5 Z" fill="#777"/>
 <path d="M722.5 680 L726 676.5 L729.5 680 Z" fill="#1a1a1a"/>
</svg>
<div class="a t" style="left:548.7px;top:673.5px;font-style:italic;color:#a8a8a8;font-size:9.3px;letter-spacing:0.3px">Введите команду</div>

<svg class="a" style="left:500px;top:635px" width="250" height="45" viewBox="500 635 250 45">
 <rect x="510" y="645.5" width="231.3" height="25.8" rx="11" fill="none" stroke="#f20c0c" stroke-width="3.8"/>
</svg>
<!-- ===== STATUS BAR ===== -->
<div class="a" style="left:32px;top:690px;width:886px;height:23px;background:linear-gradient(#3e3e3e,#383838)"></div>
<div class="a" style="left:32px;top:690px;width:886px;height:1px;background:#2e2e2e"></div>
<svg class="a" style="left:32px;top:690px" width="886" height="23" viewBox="32 690 886 23">
 <!-- layout tabs -->
 <path d="M37 691 C41 691 41 704.6 45.5 704.6 H89.5 C94 704.6 93 691 97 691 Z" fill="url(#gm)"/>
 <path d="M91 691 C95 691 94 704.6 98.5 704.6 H132 C136.5 704.6 136 691 140 691 Z" fill="#585858"/>
 <path d="M136 691 C140 691 139 704.6 143.5 704.6 H153 C157.5 704.6 157 691 161 691 Z" fill="#484848"/>
 <path d="M147.8 694 V701 M144.3 697.5 H151.3" stroke="#dcdcdc" stroke-width="1.6"/>
 <defs><linearGradient id="gm" x1="0" y1="0" x2="0" y2="1"><stop offset="0" stop-color="#5a5a5a"/><stop offset="1" stop-color="#6e6e6e"/></linearGradient></defs>
 <!-- boxes -->
 <g fill="#474747" stroke="#555" stroke-width="1">
  <rect x="358.5" y="692" width="117.5" height="19.5" rx="1"/>
  <rect x="477.3" y="692" width="43" height="19.5" rx="1"/>
  <rect x="521.9" y="692" width="49.9" height="19.5" rx="1"/>
  <rect x="573.5" y="692" width="77.5" height="19.5" rx="1"/>
  <rect x="652.6" y="692" width="48.4" height="19.5" rx="1"/>
  <rect x="702.7" y="692" width="17.5" height="19.5" rx="1"/>
  <rect x="723.1" y="692" width="81.5" height="19.5" rx="1"/>
  <rect x="806.9" y="692" width="30.3" height="19.5" rx="1"/>
  <rect x="838.5" y="692" width="17.5" height="19.5" rx="1"/>
  <rect x="858.2" y="692" width="19.3" height="19.5" rx="1"/>
  <rect x="879.7" y="692" width="38" height="19.5" rx="1"/>
 </g>
 <!-- blue buttons -->
 <g fill="#5b8dc8">
  <rect x="523.8" y="693" width="17" height="16.7"/>
  <rect x="593" y="693" width="17" height="16.7"/>
  <rect x="654" y="693" width="17" height="16.7"/>
  <rect x="673" y="693" width="16.5" height="16.7"/>
  <rect x="725.4" y="693" width="15.1" height="16.7"/>
  <rect x="743.5" y="693" width="15.8" height="16.7"/>
 </g>
 <!-- grid -->
 <path d="M525.5 697 H539 M525.5 700.5 H539 M525.5 704 H539 M527.5 695 V708 M531 695 V708 M534.5 695 V708 M538 695 V708" stroke="#f4f8ff" stroke-width="1.1"/>
 <!-- snap dots -->
 <g fill="#f0f0f0"><rect x="546" y="696" width="1.6" height="1.6"/><rect x="550" y="696" width="1.6" height="1.6"/><rect x="554" y="696" width="1.6" height="1.6"/><rect x="546" y="700" width="1.6" height="1.6"/><rect x="550" y="700" width="1.6" height="1.6"/><rect x="554" y="700" width="1.6" height="1.6"/><rect x="546" y="704" width="1.6" height="1.6"/><rect x="550" y="704" width="1.6" height="1.6"/><rect x="554" y="704" width="1.6" height="1.6"/></g>
 <g fill="#f0f0f0">
  <path d="M563.2 699.8 H568.2 L565.7 702.5 Z"/>
  <path d="M614 699.8 H619 L616.5 702.5 Z"/>
  <path d="M643.8 699.8 H648.8 L646.3 702.5 Z"/>
  <path d="M693.9 699.8 H698.9 L696.4 702.5 Z"/>
  <path d="M796.5 699.8 H801.5 L799 702.5 Z"/>
  <path d="M829 699.8 H834 L831.5 702.5 Z"/>
 </g>
 <!-- ortho -->
 <path d="M577.5 694.5 V707.5 H589 M579.5 704 H582 V707.5" stroke="#e0e0e0" stroke-width="1" fill="none"/>
 <!-- polar -->
 <circle cx="600.5" cy="702" r="4.7" stroke="#f4f8ff" stroke-width="1.2" fill="none"/>
 <path d="M600.5 702 L607.5 695 M603 702 H607" stroke="#f4f8ff" stroke-width="1.2"/>
 <!-- iso -->
 <path d="M627 696 L637 706" stroke="#d86a3a" stroke-width="1.1"/>
 <path d="M631.5 694.5 V708" stroke="#3cc35a" stroke-width="1.1"/>
 <circle cx="631.5" cy="701" r="1.7" fill="#bdbdbd"/>
 <!-- osnap track -->
 <path d="M657 707 L667.5 697 M657 707 H667" stroke="#f4f8ff" stroke-width="1.2" fill="none"/>
 <circle cx="663" cy="702.5" r="1" fill="#f4f8ff"/>
 <!-- osnap -->
 <rect x="677" y="698" width="10.5" height="10" stroke="#f4f8ff" stroke-width="1.2" fill="none"/>
 <rect x="675.5" y="694.5" width="3.2" height="3.2" stroke="#f4f8ff" stroke-width="1" fill="none"/>
 <!-- lineweight -->
 <path d="M706 696 H718 M709 699.5 H718 M706 703 H718 M709 706.5 H718" stroke="#e4e4e4" stroke-width="1.4"/>
 <!-- annotation icons -->
 <g fill="#f4f8ff">
  <path d="M728 708 L732.5 697 L737 708 L732.5 705 Z"/>
  <path d="M746 708 L750.5 697 L755 708 L750.5 705 Z"/>
 </g>
 <circle cx="737.5" cy="698.5" r="2.3" stroke="#f4f8ff" stroke-width="1" fill="none"/>
 <path d="M756.5 695 L754.5 699 H756.5 L755 702.5" stroke="#f4f8ff" stroke-width="1" fill="none"/>
 <path d="M764.5 708 L769.5 696.5 L774.5 708 L769.5 705 Z" fill="#dcdcdc"/>
 <!-- gear -->
 <g transform="translate(815.9 701.5)">
  <circle r="4.2" fill="#e8e8e8"/>
  <g stroke="#e8e8e8" stroke-width="2.2"><path d="M0 -6.5 V6.5 M-6.5 0 H6.5 M-4.6 -4.6 L4.6 4.6 M4.6 -4.6 L-4.6 4.6"/></g>
  <circle r="1.8" fill="#474747"/>
 </g>
 <!-- plus -->
 <path d="M847.2 694.5 V709 M840 701.8 H854.5" stroke="#e8e8e8" stroke-width="1.6"/>
 <!-- shapes -->
 <rect x="862.5" y="694.5" width="4.5" height="5.5" stroke="#e0e0e0" stroke-width="1" fill="none"/>
 <circle cx="872" cy="699" r="2.6" stroke="#e0e0e0" stroke-width="1" fill="none"/>
 <path d="M864.5 708.5 L867.5 703 L870.5 708.5 Z" stroke="#e0e0e0" stroke-width="1" fill="none"/>
 <!-- fullscreen -->
 <rect x="882.5" y="695.5" width="12.5" height="11" stroke="#e0e0e0" stroke-width="1" fill="none"/>
 <path d="M885 704 L892 698 M885 704 V701.5 M885 704 H887.5 M892 698 V700.5 M892 698 H889.5" stroke="#e0e0e0" stroke-width="1" fill="none"/>
 <!-- hamburger -->
 <path d="M900.5 696.5 H913.5 M900.5 701.5 H913.5 M900.5 706.5 H913.5" stroke="#e8e8e8" stroke-width="1.6"/>
</svg>
<div class="a t pb" style="left:49.3px;top:692px;color:#f6f6f6;font-size:9.4px">Модель</div>
<div class="a t" style="left:101.8px;top:691.5px;color:#a8a8b0;font-size:9.8px">Лист1</div>
<div class="a t" style="left:366px;top:695.5px;color:#f0f0f0;font-size:9.2px">88.4718, 97.9988, 0.0000</div>
<div class="a t" style="left:480.5px;top:695.5px;color:#f0f0f0;font-size:9px">МОДЕЛЬ</div>
<div class="a t" style="left:782.9px;top:695.5px;color:#f0f0f0;font-size:9px">1:1</div>
</body></html>
